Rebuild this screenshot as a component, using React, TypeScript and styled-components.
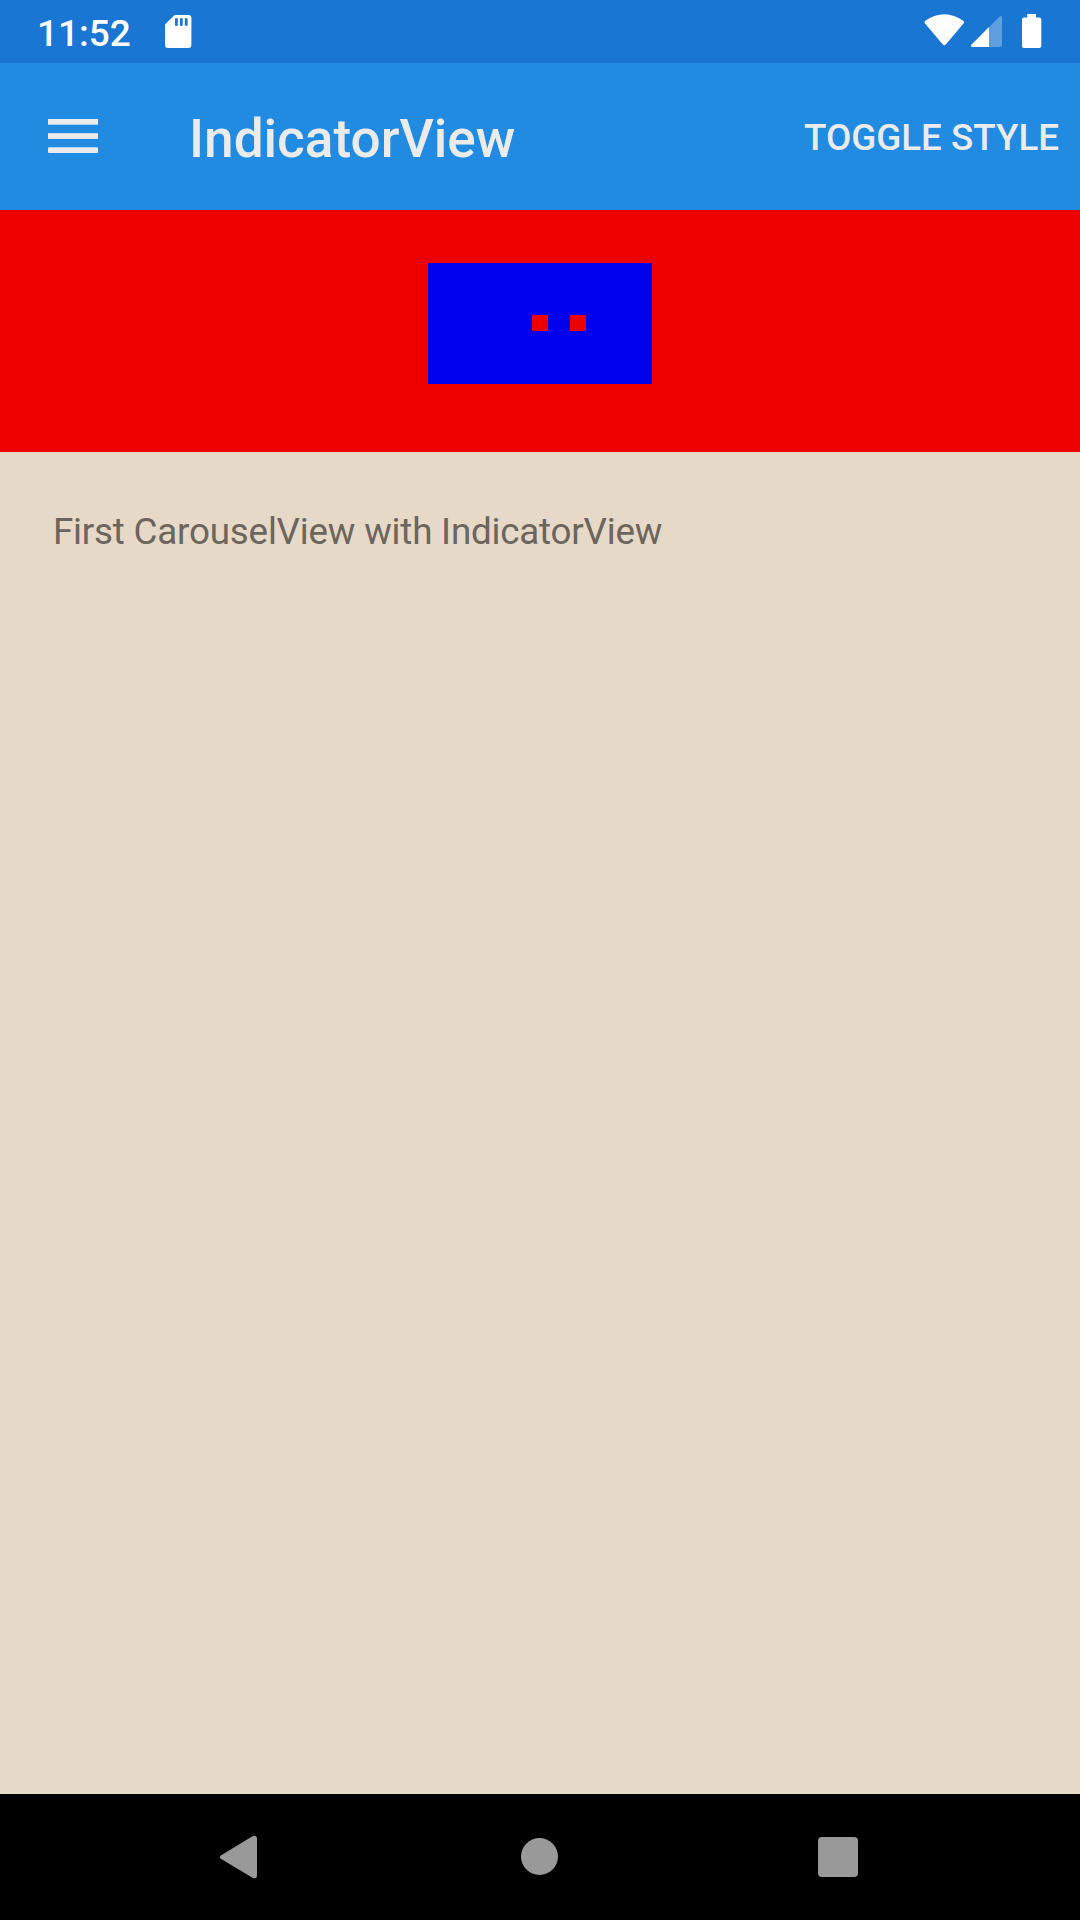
import React from 'react';
import styled, { createGlobalStyle } from 'styled-components';

const GlobalStyle = createGlobalStyle`
  * { box-sizing: border-box; }
  body { margin: 0; font-family: Roboto, "Liberation Sans", sans-serif; }
`;

const Screen = styled.div`
  width: 1080px;
  height: 1920px;
  display: flex;
  flex-direction: column;
  overflow: hidden;
  background: #e6d9c8;
`;

const StatusBar = styled.header`
  height: 63px;
  flex: none;
  display: flex;
  align-items: center;
  padding: 4px 38px 0 37px;
  background: #1976d2;
  color: #fff;
`;

const Clock = styled.span`
  font-size: 37px;
  font-weight: 500;
  line-height: 44px;
`;

const CardIcon = styled.svg`
  display: block;
  width: 28px;
  height: 34px;
  margin: -5px auto 0 33px;
`;

const StatusIcon = styled.svg<{ $gap: number }>`
  display: block;
  margin-left: ${(p) => p.$gap}px;
  margin-top: -5px;
`;

const AppBar = styled.div`
  height: 147px;
  flex: none;
  display: flex;
  align-items: center;
  padding: 0 21px 0 48px;
  background: #208be1;
  color: #ebebeb;
`;

const MenuButton = styled.button`
  width: 50px;
  height: 34px;
  margin-top: -1px;
  padding: 0;
  border: 0;
  background: none;
`;

const MenuIcon = styled.svg`
  display: block;
`;

const Title = styled.h1`
  margin: 5px auto 0 91px;
  font-size: 53.15px;
  font-weight: 500;
  line-height: 62px;
`;

const ToggleButton = styled.button`
  margin-top: 2px;
  padding: 0;
  border: 0;
  background: none;
  color: inherit;
  font-family: inherit;
  font-size: 36.75px;
  font-weight: 500;
  line-height: 44px;
  text-transform: uppercase;
`;

const IndicatorPanel = styled.section`
  height: 242px;
  flex: none;
  display: flex;
  justify-content: center;
  align-items: flex-start;
  padding-top: 53px;
  background: #ec0000;
`;

const Indicator = styled.div`
  width: 224px;
  height: 121px;
  display: flex;
  justify-content: center;
  align-items: flex-start;
  gap: 22px;
  padding-top: 52px;
  background: #0000ec;
`;

const Dot = styled.span<{ $selected: boolean }>`
  width: 16px;
  height: 16px;
  background: ${(p) => (p.$selected ? '#0000ec' : '#ec0000')};
`;

const Content = styled.main`
  flex: 1;
  padding: 58px 53px;
`;

const Caption = styled.p`
  margin: 0;
  color: #6c655d;
  font-size: 36.75px;
  letter-spacing: -0.2px;
  line-height: 44px;
`;

const NavBar = styled.nav`
  height: 126px;
  flex: none;
  display: flex;
  justify-content: center;
  align-items: center;
  gap: 238px;
  background: #000;
`;

const NavIcon = styled.svg`
  display: block;
  fill: #999;
`;

const pages = [0, 1, 2];
const currentPage = 0;

export default function App() {
  return (
    <>
      <GlobalStyle />
      <Screen>
        <StatusBar>
          <Clock>11:52</Clock>
          <CardIcon viewBox="0 0 28 34">
            <path
              fill="#fff"
              fillRule="evenodd"
              d="M10.6 1H24.4Q27.4 1 27.4 4V31Q27.4 34 24.4 34H4Q1 34 1 31V10.6ZM11 4.3V11.7H13.8V4.3ZM15.9 4.3V11.7H18.7V4.3ZM20.8 4.3V11.7H23.6V4.3Z"
            />
          </CardIcon>
          <StatusIcon $gap={0} width="42" height="34" viewBox="0 0 42 34">
            <path fill="#fff" d="M2 9.6Q.6 8 2.3 6.8C8.2 2.4 14.5 .2 21.3 .2S34.3 2.4 40.2 6.8Q41.9 8 40.5 9.6L23 30.3Q21.3 32.3 19.6 30.3Z" />
          </StatusIcon>
          <StatusIcon $gap={5} width="32" height="34" viewBox="0 0 32 34">
            <path fill="#fff" opacity=".3" d="M19 13.2L29.5 2.7Q32 1 32 3.5V31Q32 33 30 33H19Z" />
            <path fill="#fff" d="M19 13V33H2.5Q0 33 1.4 30.8Z" />
          </StatusIcon>
          <StatusIcon $gap={20} width="20" height="34" viewBox="0 0 20 34">
            <path fill="#fff" d="M5.2 0H14V3.6H17.3Q19.3 3.6 19.3 5.6V32Q19.3 34 17.3 34H2Q0 34 0 32V5.6Q0 3.6 2 3.6H5.2Z" />
          </StatusIcon>
        </StatusBar>
        <AppBar>
          <MenuButton aria-label="Menu">
            <MenuIcon width="50" height="34" viewBox="0 0 50 34" fill="#ebebeb">
              <rect width="50" height="5.7" />
              <rect y="14.2" width="50" height="5.7" />
              <rect y="28.2" width="50" height="5.8" rx="1" />
            </MenuIcon>
          </MenuButton>
          <Title>IndicatorView</Title>
          <ToggleButton>Toggle Style</ToggleButton>
        </AppBar>
        <IndicatorPanel>
          <Indicator>
            {pages.map((page) => (
              <Dot key={page} $selected={page === currentPage} />
            ))}
          </Indicator>
        </IndicatorPanel>
        <Content>
          <Caption>First CarouselView with IndicatorView</Caption>
        </Content>
        <NavBar>
          <NavIcon width="60" height="60" viewBox="212 1827 60 60">
            <path d="M221.2 1855.2L252.5 1836.3Q257 1834.5 257 1839V1875Q257 1879.5 252.5 1877.7L221.2 1859Q218.5 1857.2 221.2 1855.2Z" />
          </NavIcon>
          <NavIcon width="60" height="60" viewBox="510 1827 60 60">
            <circle cx="539.5" cy="1856.5" r="18.5" />
          </NavIcon>
          <NavIcon width="60" height="60" viewBox="808 1827 60 60">
            <rect x="818" y="1837" width="40" height="40" rx="4" />
          </NavIcon>
        </NavBar>
      </Screen>
    </>
  );
}
